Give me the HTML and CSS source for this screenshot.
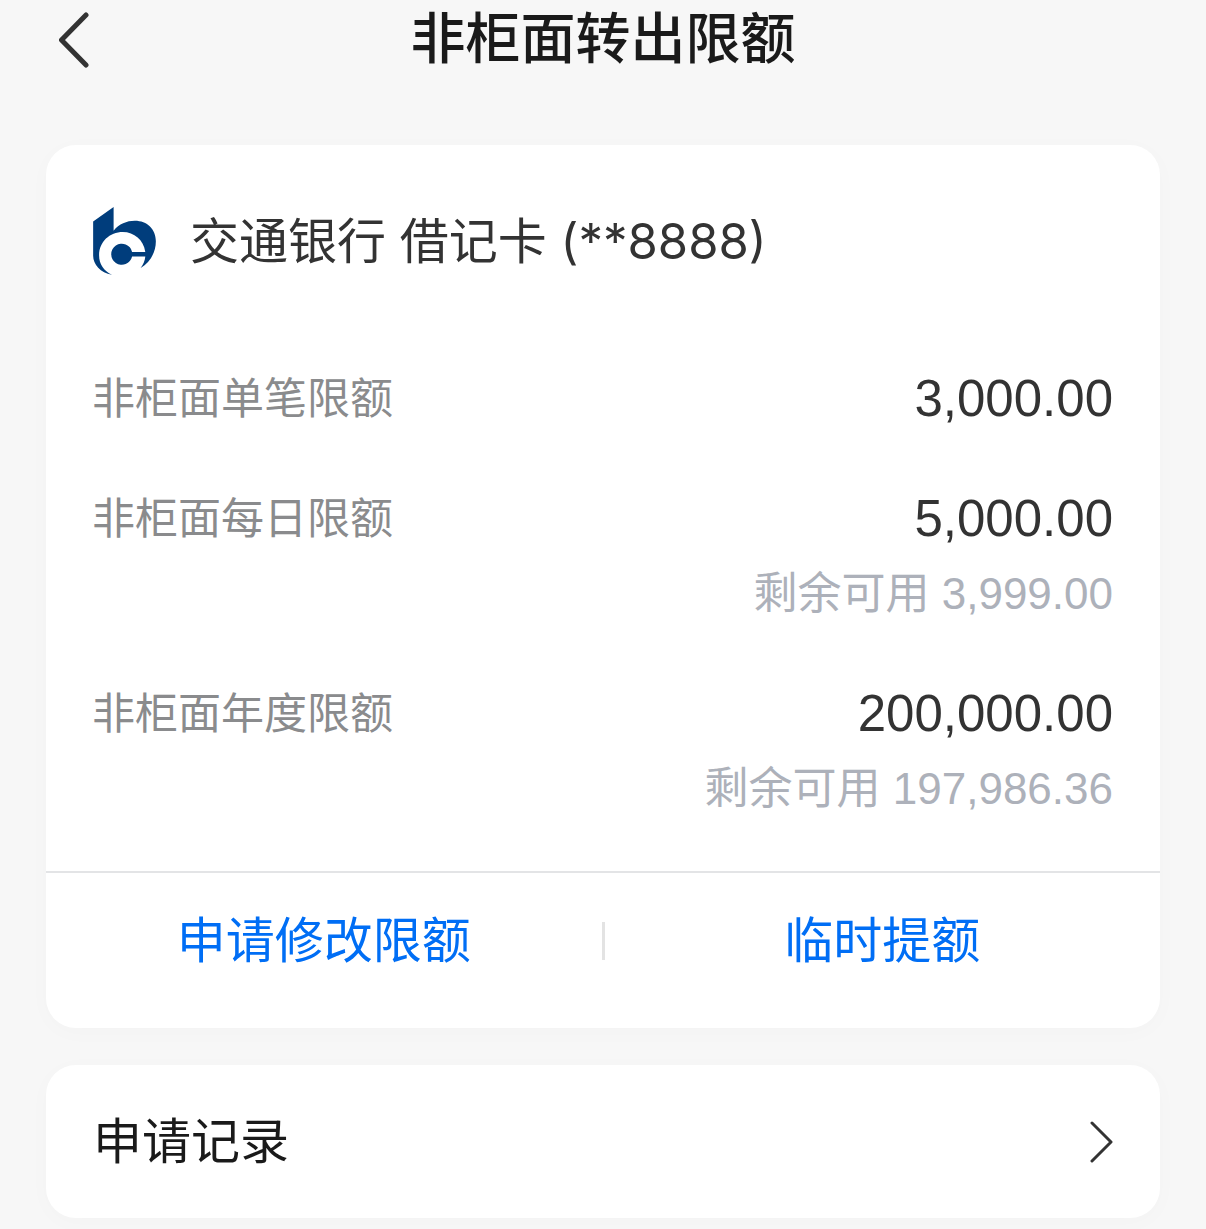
FILE: index.html
```
<!DOCTYPE html>
<html lang="zh-CN">
<head>
    <meta charset="UTF-8">
    <meta name="viewport" content="width=device-width, initial-scale=1.0">
    <title>非柜面转出限额</title>
    <link rel="stylesheet" href="styles.css">
</head>
<body>

    <header class="nav-bar">
        <button type="button" class="back-button" aria-label="返回">
            <svg width="30" height="56" viewBox="0 0 30 56" aria-hidden="true">
                <path d="M27 3 L2.5 28 L27 53"/>
            </svg>
        </button>
        <h1 class="nav-title">非柜面转出限额</h1>
    </header>

    <main class="content">
        <section class="card">
            <!-- Bank card -->
            <div class="bank">
                <svg class="bank-logo" viewBox="38 32 194 206" aria-hidden="true">
                    <path d="M40 76 L102 32 V104 C118 84 142 74 166 74 C204 74 230 100 230 136 C230 170 212 200 184 217 C192 206 197 195 198 182 H158 A32 32 0 1 1 158 168 H198 C193 132 164 108 130 108 C90 108 58 138 58 178 C58 204 72 226 97 237 C62 232 40 206 40 180 Z"/>
                </svg>
                <h2 class="bank-name">交通银行 借记卡 (**8888)</h2>
            </div>

            <!-- Limits -->
            <dl class="limits">
                <div class="limit">
                    <dt>非柜面单笔限额</dt>
                    <dd class="amount">3,000.00</dd>
                </div>
                <div class="limit">
                    <dt>非柜面每日限额</dt>
                    <dd class="amount">5,000.00</dd>
                    <dd class="remaining">剩余可用 3,999.00</dd>
                </div>
                <div class="limit">
                    <dt>非柜面年度限额</dt>
                    <dd class="amount">200,000.00</dd>
                    <dd class="remaining">剩余可用 197,986.36</dd>
                </div>
            </dl>

            <!-- Actions -->
            <div class="actions">
                <button type="button">申请修改限额</button>
                <span class="separator"></span>
                <button type="button">临时提额</button>
            </div>
        </section>

        <a href="#" class="card record-link">
            <span>申请记录</span>
            <svg width="24" height="42" viewBox="0 0 24 42" aria-hidden="true">
                <path d="M3 2 L22 21 L3 40"/>
            </svg>
        </a>
    </main>

</body>
</html>
```
FILE: styles.css
```
* {
    box-sizing: border-box;
}

body {
    margin: 0;
    background-color: #f7f7f7;
    color: #333;
    font-family: Inter, "Noto Sans CJK SC", sans-serif;
    font-size: 49px;
    line-height: 60px;
}

h1,
h2,
dl,
dd {
    margin: 0;
    font-weight: normal;
}

button {
    padding: 0;
    border: none;
    background: none;
    font: inherit;
    cursor: pointer;
}

/* Top bar, the title stays centered between equal side columns */
.nav-bar {
    display: grid;
    grid-template-columns: 1fr auto 1fr;
    align-items: center;
    height: 80px;
    padding: 0 59px;
}

.back-button {
    justify-self: start;
}

.back-button svg {
    display: block;
    fill: none;
    stroke: #333;
    stroke-width: 5;
    stroke-linecap: round;
    stroke-linejoin: round;
}

.nav-title {
    padding-bottom: 4px;
    color: #1a1a1a;
    font-size: 55px;
    font-weight: 500;
}

/* Cards */
.content {
    display: flex;
    flex-direction: column;
    gap: 37px;
    padding: 65px 46px 11px;
}

.card {
    border-radius: 30px;
    background-color: #fff;
    box-shadow: 0 4px 24px rgba(0, 0, 0, 0.02);
}

.bank {
    display: flex;
    align-items: center;
    gap: 33px;
    padding: 62px 46px 0;
}

.bank-logo {
    width: 65px;
    height: 68px;
    fill: #003d7c;
}

.bank-name {
    padding-top: 2px;
    font-size: 49px;
}

/* Limits */
.limits {
    display: flex;
    flex-direction: column;
    gap: 60px;
    padding: 94px 47px 52px 46px;
    font-family: "Liberation Sans", "Noto Sans CJK SC", sans-serif;
}

.limit {
    display: grid;
    grid-template-columns: auto 1fr;
    row-gap: 15px;
}

.limit dt {
    color: #8a8b8d;
    font-size: 43px;
}

.limit dd {
    text-align: right;
}

.amount {
    font-size: 51px;
}

.remaining {
    grid-column: 1 / -1;
    color: #adb1ba;
    font-size: 44px;
}

/* Action buttons */
.actions {
    display: grid;
    grid-template-columns: 1fr 3px 1fr;
    align-items: center;
    padding: 38px 0 57px;
    border-top: 2px solid #e3e4e6;
}

.actions button {
    color: #006ef5;
}

.separator {
    height: 38px;
    background-color: #e3e3e3;
}

.record-link {
    display: flex;
    align-items: center;
    justify-content: space-between;
    padding: 47px 47px 46px;
    color: #1a1a1a;
    text-decoration: none;
}

.record-link svg {
    fill: none;
    stroke: #333;
    stroke-width: 3;
    stroke-linecap: round;
    stroke-linejoin: round;
}
```
